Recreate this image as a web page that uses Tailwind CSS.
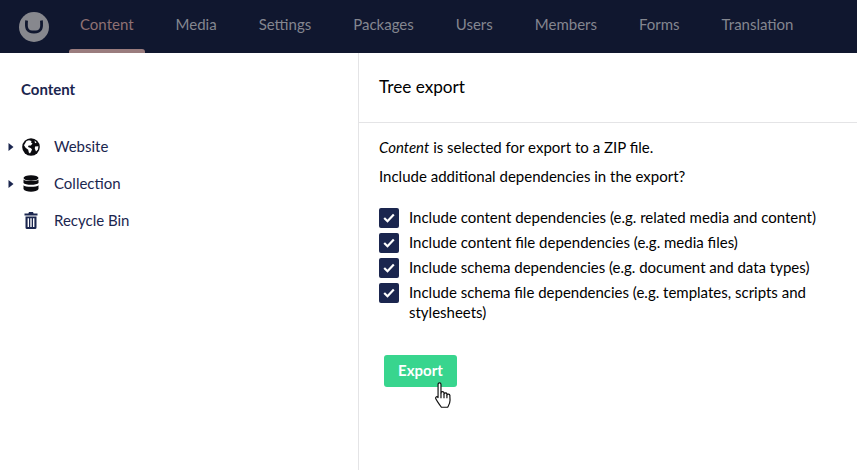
<!DOCTYPE html>
<html lang="en">
<head>
  <meta charset="UTF-8" />
  <title>Tree export</title>
  <script src="https://cdn.jsdelivr.net/npm/@tailwindcss/browser@4"></script>
</head>
<body class="bg-white w-[857px] h-[470px] overflow-hidden font-['Lato',sans-serif] text-[15px] text-black">
  <header class="h-[53px] bg-[#10172f] flex items-stretch pl-[19px]">
    <div class="flex items-center">
      <div class="w-[30px] h-[30px] rounded-full bg-[#87888e] flex items-center justify-center">
        <svg width="20" height="15" viewBox="0 0 20 15" fill="none"><path d="M2.6 1.5 C1.8 9 2.6 13 10 13 C17.4 13 18.2 9 17.4 1.5" stroke="#10172f" stroke-width="2.8" /></svg>
      </div>
    </div>
    <nav class="flex ml-[20px] gap-[20px] text-[#84868f]">
      <a class="relative px-[11px] flex items-center pb-[5px] text-[#8f7173]">Content<span class="absolute left-0 right-0 bottom-0 h-[4px] rounded-t-[3px] bg-[#9a7c7e]"></span></a>
      <a class="px-[11px] flex items-center pb-[5px]">Media</a>
      <a class="px-[11px] flex items-center pb-[5px]">Settings</a>
      <a class="px-[11px] flex items-center pb-[5px]">Packages</a>
      <a class="px-[11px] flex items-center pb-[5px]">Users</a>
      <a class="px-[11px] flex items-center pb-[5px]">Members</a>
      <a class="px-[11px] flex items-center pb-[5px]">Forms</a>
      <a class="px-[11px] flex items-center pb-[5px]">Translation</a>
    </nav>
  </header>

  <div class="flex h-[417px]">
    <aside class="w-[359px] shrink-0 border-r border-[#e4e4e6] text-[#1b264f]">
      <h2 class="font-bold text-[15px] pl-[21px] pt-[26px] leading-[20px]">Content</h2>
      <ul class="mt-[29px]">
        <li class="h-[37px] flex items-center">
          <svg class="ml-[8px]" width="6" height="8" viewBox="0 0 6 8"><path d="M0.5 0 L5.5 4 L0.5 8 Z" fill="#1b264f" /></svg>
          <svg class="ml-[8px]" width="18" height="18" viewBox="0 0 18 18"><circle cx="9" cy="9" r="8.8" fill="#0b0b0f" /><path d="M4.5 3 L7 2.2 L9.5 3 L9 4.6 L10.5 5.6 L8.8 7.4 L6.6 7.6 L6 9 L8.6 10 L10 11.2 L9.4 13 L8 15.6 L6.8 14.4 L6.2 11.8 L3.6 9.8 L2 7.2 Z M12.6 2.6 L14.6 4.4 L13 5.2 Z M13 8.4 L16.4 8.2 L16 11.4 L14 13.4 L12.8 10.6 Z" fill="#fff" /></svg>
          <span class="ml-[14px]">Website</span>
        </li>
        <li class="h-[37px] flex items-center">
          <svg class="ml-[8px]" width="6" height="8" viewBox="0 0 6 8"><path d="M0.5 0 L5.5 4 L0.5 8 Z" fill="#1b264f" /></svg>
          <svg class="ml-[9px]" width="16" height="17" viewBox="0 0 16 17" fill="#0b0b0f"><ellipse cx="8" cy="3" rx="7.5" ry="2.8" /><path d="M0.5 4.6 C2 6.6 14 6.6 15.5 4.6 V8 C14 10.4 2 10.4 0.5 8 Z" /><path d="M0.5 10.2 C2 12.2 14 12.2 15.5 10.2 V14 C14 17.6 2 17.6 0.5 14 Z" /></svg>
          <span class="ml-[15px]">Collection</span>
        </li>
        <li class="h-[37px] flex items-center">
          <svg class="ml-[24px]" width="14" height="17" viewBox="0 0 14 17" fill="#1b264f"><path d="M5 0 H9 L9.6 1.4 H13.5 V3.4 H0.5 V1.4 H4.4 Z" /><path fill-rule="evenodd" d="M1.5 4.4 H12.5 V15.5 Q12.5 17 11 17 H3 Q1.5 17 1.5 15.5 Z M3.6 6.2 V15 H5 V6.2 Z M6.3 6.2 V15 H7.7 V6.2 Z M9 6.2 V15 H10.4 V6.2 Z" /></svg>
          <span class="ml-[16px]">Recycle Bin</span>
        </li>
      </ul>
    </aside>

    <main class="flex-1 min-w-0">
      <div class="h-[70px] border-b border-[#e4e4e6] pl-[20px] pt-[23px]">
        <h1 class="text-[17.2px] leading-[22px]">Tree export</h1>
      </div>
      <div class="pl-[20px] pt-[14px] pr-[30px]">
        <p class="leading-[20px]"><em>Content</em> is selected for export to a ZIP file.</p>
        <p class="leading-[20px] mt-[9px]">Include additional dependencies in the export?</p>
        <div class="mt-[22px] flex flex-col gap-[5px]">
          <label class="flex gap-[10px] leading-[20px]">
            <span class="w-[20px] h-[20px] shrink-0 rounded-[2px] bg-[#1b264f] flex items-center justify-center"><svg width="12" height="10" viewBox="0 0 12 10" fill="none"><path d="M1.2 5 L4.5 8.2 L10.8 1.5" stroke="#fff" stroke-width="2.2" /></svg></span>
            <span class="-mt-[1px]">Include content dependencies (e.g. related media and content)</span>
          </label>
          <label class="flex gap-[10px] leading-[20px]">
            <span class="w-[20px] h-[20px] shrink-0 rounded-[2px] bg-[#1b264f] flex items-center justify-center"><svg width="12" height="10" viewBox="0 0 12 10" fill="none"><path d="M1.2 5 L4.5 8.2 L10.8 1.5" stroke="#fff" stroke-width="2.2" /></svg></span>
            <span class="-mt-[1px]">Include content file dependencies (e.g. media files)</span>
          </label>
          <label class="flex gap-[10px] leading-[20px]">
            <span class="w-[20px] h-[20px] shrink-0 rounded-[2px] bg-[#1b264f] flex items-center justify-center"><svg width="12" height="10" viewBox="0 0 12 10" fill="none"><path d="M1.2 5 L4.5 8.2 L10.8 1.5" stroke="#fff" stroke-width="2.2" /></svg></span>
            <span class="-mt-[1px]">Include schema dependencies (e.g. document and data types)</span>
          </label>
          <label class="flex gap-[10px] leading-[20px]">
            <span class="w-[20px] h-[20px] shrink-0 rounded-[2px] bg-[#1b264f] flex items-center justify-center"><svg width="12" height="10" viewBox="0 0 12 10" fill="none"><path d="M1.2 5 L4.5 8.2 L10.8 1.5" stroke="#fff" stroke-width="2.2" /></svg></span>
            <span class="-mt-[1px]">Include schema file dependencies (e.g. templates, scripts and stylesheets)</span>
          </label>
        </div>
        <div class="relative mt-[33px] ml-[5px] w-[73px]">
          <button class="w-[73px] h-[32px] rounded-[3px] bg-[#38d58e] text-white font-bold text-[15px] pb-[2px]">Export</button>
          <svg class="absolute left-[50px] top-[27px]" width="20" height="27" viewBox="0 0 18 25" fill="#fff" stroke="#111" stroke-width="1.1" stroke-linejoin="round"><path d="M3.5 2.2 C3.5 0.4 6.2 0.4 6.2 2.2 V10 C6.4 8.6 8.8 8.6 9 10 V11 C9.2 9.8 11.5 9.8 11.7 11 V12 C12 10.8 14.4 11 14.4 12.4 L14.6 17 C14.6 20 13.4 21.5 12.4 23.4 H6.6 C5.4 21.4 3 18.8 1.4 15.6 C0.6 14 2.4 12.8 3.5 14.4 Z" /><path d="M6.2 10 V15 M9 11 V15 M11.7 12 V15" fill="none" /></svg>
        </div>
      </div>
    </main>
  </div>
</body>
</html>
